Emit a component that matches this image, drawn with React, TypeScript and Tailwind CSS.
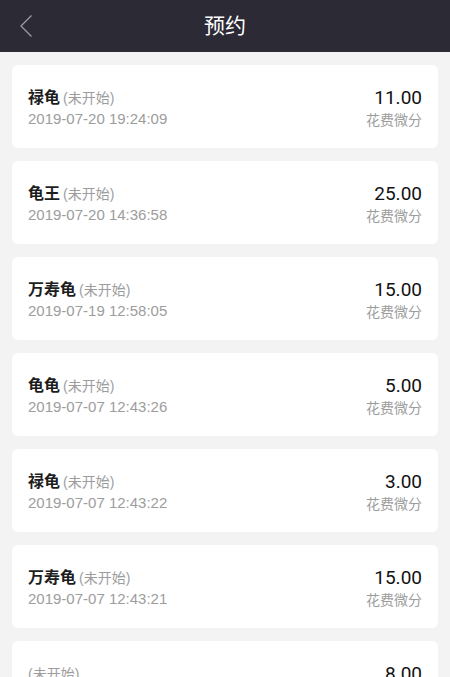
const records = [
  { name: "禄龟", time: "2019-07-20 19:24:09", amount: "11.00" },
  { name: "龟王", time: "2019-07-20 14:36:58", amount: "25.00" },
  { name: "万寿龟", time: "2019-07-19 12:58:05", amount: "15.00" },
  { name: "龟龟", time: "2019-07-07 12:43:26", amount: "5.00" },
  { name: "禄龟", time: "2019-07-07 12:43:22", amount: "3.00" },
  { name: "万寿龟", time: "2019-07-07 12:43:21", amount: "15.00" },
  { name: "", time: "2019-07-07 12:43:20", amount: "8.00" },
];

const font = {
  fontFamily: '"Liberation Sans", "Noto Sans CJK SC", sans-serif',
};

export default function App() {
  return (
    <div className="h-[677px] w-[450px] overflow-hidden bg-[#f3f3f3]" style={font}>
      <header className="relative flex h-[52px] items-center justify-center bg-[#2b2a35]">
        <button className="absolute left-[19px] top-[14px]" aria-label="返回">
          <svg width="14" height="24" viewBox="0 0 14 24" fill="none">
            <path d="M12.5 1.5 L2 12 L12.5 22.5" stroke="#9d9ca4" strokeWidth="1.3" />
          </svg>
        </button>
        <h1 className="text-[21px] text-white">预约</h1>
      </header>

      <div className="flex flex-col gap-[13px] px-3 pt-[13px]">
        {records.map((r, i) => (
          <div
            key={i}
            className="flex h-[83px] shrink-0 items-start justify-between rounded-md bg-white px-4 pt-[22px]"
          >
            <div className="flex flex-col">
              <div className="flex h-[22px] items-center">
                {r.name && (
                  <span className="mr-[3px] text-[16px] font-semibold text-[#1e1e1e]">{r.name}</span>
                )}
                <span className="text-[14px] text-[#9d9d9d]">(未开始)</span>
              </div>
              <div className="flex h-[20px] items-center text-[15px] text-[#9d9d9d]">{r.time}</div>
            </div>
            <div className="flex flex-col items-end">
              <div className="-mt-[1px] flex h-[24px] items-center font-['Roboto',sans-serif] text-[19px] font-normal text-[#111111]">
                {r.amount}
              </div>
              <div className="flex h-[20px] items-center text-[14px] text-[#9d9d9d]">花费微分</div>
            </div>
          </div>
        ))}
      </div>
    </div>
  );
}
